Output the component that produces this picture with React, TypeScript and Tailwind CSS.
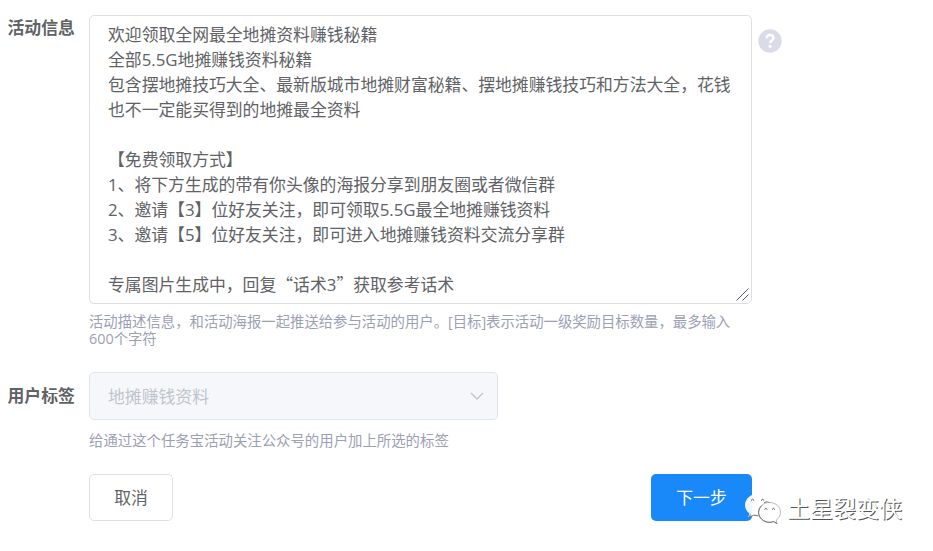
import React from "react";

const Quote = ({ children }: { children: React.ReactNode }) => (
  <span className="leading-none font-['Noto_Sans_CJK_SC',sans-serif]">{children}</span>
);

const WechatLogo = () => (
  <svg width="37" height="33" viewBox="0 0 37 33" fill="none">
    <path
      d="M13.5 1C6.500 1 1 5.800 1 12c0 3.400 1.700 6.400 4.400 8.400L4.200 24.500l4.600-2.300c1.500.4 3 .6 4.700.6 7 0 12.500-4.800 12.500-10.800S20.500 1 13.500 1z"
      fill="#fff"
      fillOpacity="0.93"
    />
    <path d="M6.400 21.400l-1 3.100 4-2.300 5 .6M20 9.500q2.500-1.500 6 .2" stroke="#666" strokeWidth="0.9" />
    <path d="M7 7.500q1.500-2.500 3.200 0M17 7.500q1.500-2.500 3.200 0" stroke="#555" strokeWidth="1" />
    <path
      d="M25.500 9.500C19.500 9.500 14.500 13.800 14.500 19.300s5 10 11 10c1.500 0 2.900-.2 4.100-.7l3.500 2-.9-3.500c2.600-1.900 4.300-4.500 4.300-7.800 0-5.500-5-9.800-11-9.800z"
      fill="#fff"
      stroke="#999"
      strokeWidth="0.7"
    />
    <path d="M18 12.500c-4.500 4-4.500 10 0 14 4 3.500 8.500 3 11.600 2.100l3.500 2" stroke="#555" strokeWidth="0.8" />
    <path d="M20.500 16.500q1.400-2.300 2.900 0M28 16.500q1.400-2.300 2.900 0" stroke="#555" strokeWidth="1" />
  </svg>
);

const App = () => {
  return (
    <div className="relative w-[933px] h-[551px] overflow-hidden bg-white pl-[7.500px] pt-[15px] text-[16.830px] text-[#606266] font-['Open_Sans','Noto_Sans_CJK_SC',sans-serif]">
      <div className="flex items-start">
        <label className="w-[81.500px] shrink-0 font-bold leading-[25px]">活动信息</label>
        <div className="w-[663px]">
          <div className="relative h-[289px] rounded-[5px] border border-[#dcdfe6] pl-[18px] pt-[6px] leading-[25px] whitespace-pre">
            <p>欢迎领取全网最全地摊资料赚钱秘籍</p>
            <p>全部5.5G地摊赚钱资料秘籍</p>
            <p>包含摆地摊技巧大全、最新版城市地摊财富秘籍、摆地摊赚钱技巧和方法大全，花钱</p>
            <p>也不一定能买得到的地摊最全资料</p>
            <br />
            <p>【免费领取方式】</p>
            <p>1、将下方生成的带有你头像的海报分享到朋友圈或者微信群</p>
            <p>2、邀请【3】位好友关注，即可领取5.5G最全地摊赚钱资料</p>
            <p>3、邀请【5】位好友关注，即可进入地摊赚钱资料交流分享群</p>
            <br />
            <p>
              专属图片生成中，回复<Quote>“</Quote>话术3<Quote>”</Quote>获取参考话术
            </p>
            <svg className="absolute right-[2px] bottom-[2px]" width="13" height="13" viewBox="0 0 13 13">
              <path d="M0.500 12.500L12.500 0.500M6.500 12.500L12.500 6.500" stroke="#555" strokeWidth="1" />
            </svg>
          </div>
          <div className="mt-[10px] text-[14.370px] leading-[16.500px] text-[#9ca0b4] whitespace-nowrap">
            <p>活动描述信息，和活动海报一起推送给参与活动的用户。[目标]表示活动一级奖励目标数量，最多输入</p>
            <p>600个字符</p>
          </div>
        </div>
        <svg className="ml-[6px] mt-[13.500px]" width="24" height="24" viewBox="0 0 24 24">
          <circle cx="12" cy="12" r="11.700" fill="#d9dce8" />
          <path
            d="M8.700 9.300c0-2 1.400-3.300 3.400-3.300s3.300 1.200 3.300 2.900c0 2.300-3.200 2.600-3.200 5.200"
            fill="none"
            stroke="#fff"
            strokeWidth="2.400"
          />
          <circle cx="12.100" cy="17.300" r="1.600" fill="#fff" />
        </svg>
      </div>

      <div className="flex items-start mt-[25px]">
        <label className="w-[81.500px] shrink-0 pt-[11px] font-bold leading-[25px]">用户标签</label>
        <div>
          <div className="flex items-center justify-between w-[409px] h-12 rounded-[5px] border border-[#e0e4ec] bg-[#f5f7fa] pl-[18px] pr-[13px] text-[#c0c4cc]">
            <span className="pt-[2px]">地摊赚钱资料</span>
            <svg width="14" height="8" viewBox="0 0 14 8" fill="none">
              <path d="M1 1l6 6 6-6" stroke="#c0c4cc" strokeWidth="1.300" />
            </svg>
          </div>
          <p className="mt-3 text-[14.400px] leading-[17px] text-[#9ca0b4]">
            给通过这个任务宝活动关注公众号的用户加上所选的标签
          </p>
        </div>
      </div>

      <div className="flex justify-between w-[663px] ml-[81.500px] mt-[25px]">
        <button className="w-[84px] h-[47px] rounded-[5px] border border-[#dcdfe6] bg-white">取消</button>
        <button className="w-[101px] h-[47px] rounded-[5px] bg-[#1989fa] text-white">下一步</button>
      </div>

      {/* account watermark over the page corner */}
      <div className="absolute left-[744px] top-[493px] flex items-center gap-[6px]">
        <WechatLogo />
        <span className="-mt-[3px] text-[23px] leading-[32px] text-white [text-shadow:1px_1px_0_#555]">
          土星裂变侠
        </span>
      </div>
    </div>
  );
};

export default App;
